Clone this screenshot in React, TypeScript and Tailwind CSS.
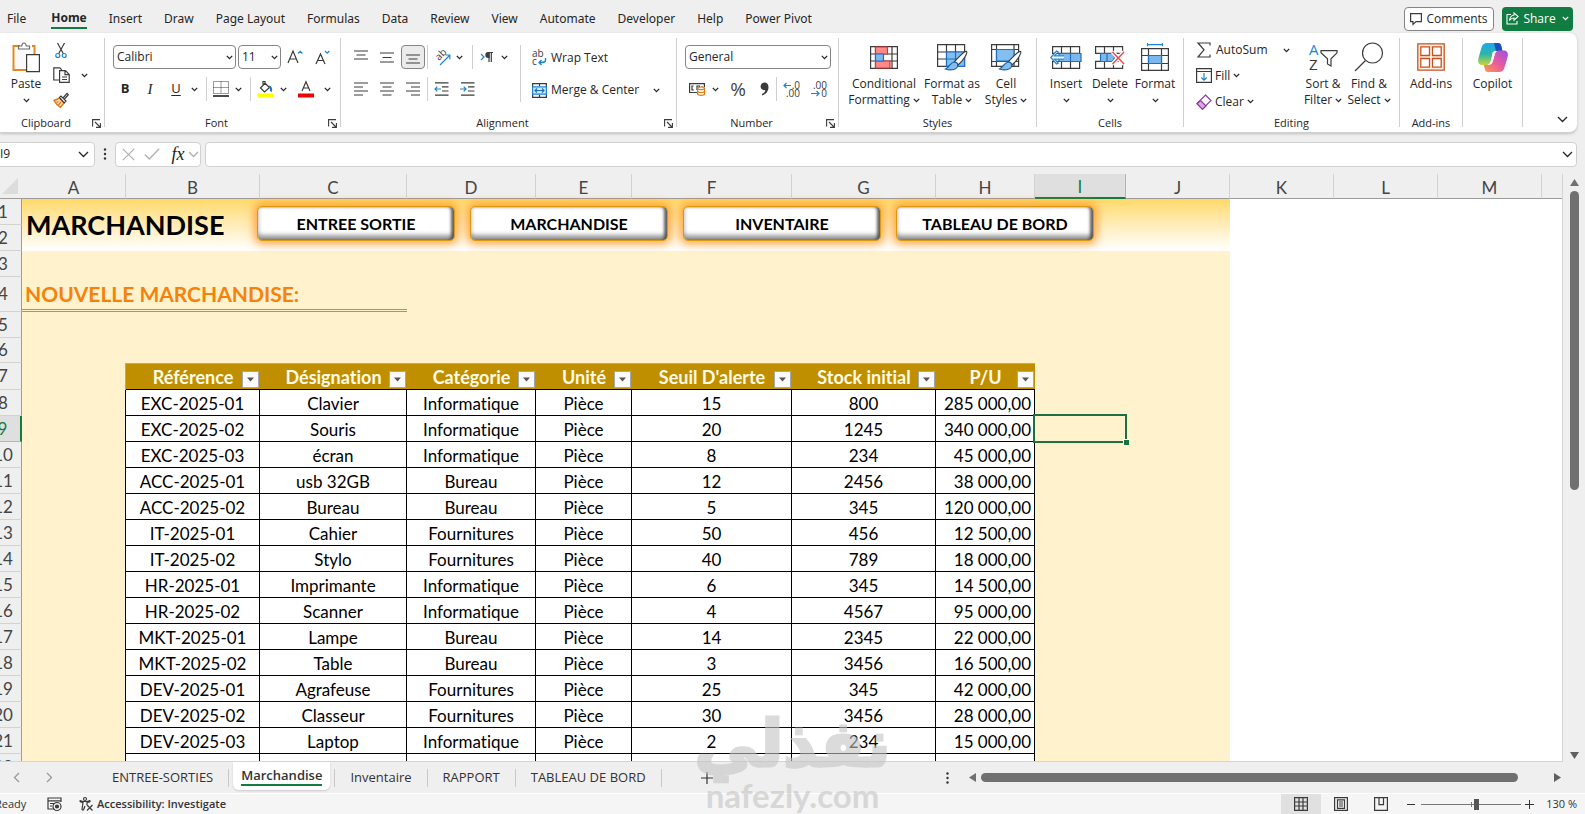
import type { ReactNode } from 'react'

const tabs = ['File', 'Home', 'Insert', 'Draw', 'Page Layout', 'Formulas', 'Data', 'Review', 'View', 'Automate', 'Developer', 'Help', 'Power Pivot']

const columns = [
  { name: 'A', width: 'w-[104px]' },
  { name: 'B', width: 'w-[134px]' },
  { name: 'C', width: 'w-[147px]' },
  { name: 'D', width: 'w-[129px]' },
  { name: 'E', width: 'w-[96px]' },
  { name: 'F', width: 'w-[160px]' },
  { name: 'G', width: 'w-[144px]' },
  { name: 'H', width: 'w-[99px]' },
  { name: 'I', width: 'w-[91px]' },
  { name: 'J', width: 'w-[104px]' },
  { name: 'K', width: 'w-[104px]' },
  { name: 'L', width: 'w-[104px]' },
  { name: 'M', width: 'w-[104px]' },
]

const headers = ['Référence', 'Désignation', 'Catégorie', 'Unité', "Seuil D'alerte", 'Stock initial', 'P/U']

const products = [
  ['EXC-2025-01', 'Clavier', 'Informatique', 'Pièce', '15', '800', '285 000,00'],
  ['EXC-2025-02', 'Souris', 'Informatique', 'Pièce', '20', '1245', '340 000,00'],
  ['EXC-2025-03', 'écran', 'Informatique', 'Pièce', '8', '234', '45 000,00'],
  ['ACC-2025-01', 'usb 32GB', 'Bureau', 'Pièce', '12', '2456', '38 000,00'],
  ['ACC-2025-02', 'Bureau', 'Bureau', 'Pièce', '5', '345', '120 000,00'],
  ['IT-2025-01', 'Cahier', 'Fournitures', 'Pièce', '50', '456', '12 500,00'],
  ['IT-2025-02', 'Stylo', 'Fournitures', 'Pièce', '40', '789', '18 000,00'],
  ['HR-2025-01', 'Imprimante', 'Informatique', 'Pièce', '6', '345', '14 500,00'],
  ['HR-2025-02', 'Scanner', 'Informatique', 'Pièce', '4', '4567', '95 000,00'],
  ['MKT-2025-01', 'Lampe', 'Bureau', 'Pièce', '14', '2345', '22 000,00'],
  ['MKT-2025-02', 'Table', 'Bureau', 'Pièce', '3', '3456', '16 500,00'],
  ['DEV-2025-01', 'Agrafeuse', 'Fournitures', 'Pièce', '25', '345', '42 000,00'],
  ['DEV-2025-02', 'Classeur', 'Fournitures', 'Pièce', '30', '3456', '28 000,00'],
  ['DEV-2025-03', 'Laptop', 'Informatique', 'Pièce', '2', '234', '15 000,00'],
  ['DEV-2025-04', 'Disque dur', 'Informatique', 'Pièce', '7', '567', '55 000,00'],
]

const shapes = ['ENTREE SORTIE', 'MARCHANDISE', 'INVENTAIRE', 'TABLEAU DE BORD']

function Chev({ className = '' }: { className?: string }) {
  return (
    <svg width="7" height="5" viewBox="0 0 7 5" fill="none" stroke="currentColor" strokeWidth="1.3" className={`shrink-0 ${className}`}>
      <path d="M.8.9 3.5 3.6 6.2.9" />
    </svg>
  )
}

function BigChev({ className = '' }: { className?: string }) {
  return (
    <svg width="11" height="7" viewBox="0 0 11 7" fill="none" stroke="currentColor" strokeWidth="1.3" className={`shrink-0 ${className}`}>
      <path d="M1 1l4.500 4.500L10 1" />
    </svg>
  )
}

function Svg({ w, h, children }: { w: number; h: number; children: ReactNode }) {
  return (
    <svg width={w} height={h} viewBox={`0 0 ${w} ${h}`} fill="none" stroke="#3b3b3b" strokeWidth="1.2" className="shrink-0 overflow-visible">
      {children}
    </svg>
  )
}

function Tool({ label, width = 'w-[26px]', className = '', children }: { label: string; width?: string; className?: string; children: ReactNode }) {
  return (
    <button aria-label={label} className={`flex h-6 shrink-0 items-center justify-center ${width} ${className}`}>
      {children}
    </button>
  )
}

function Sep({ className = 'h-6' }: { className?: string }) {
  return <span className={`w-px shrink-0 bg-[#d0d0d0] ${className}`} />
}

function Group({ label, width, launcher, children }: { label: string; width: string; launcher?: boolean; children: ReactNode }) {
  return (
    <section aria-label={label || 'Copilot'} className={`mt-[5px] flex h-[94px] shrink-0 ${width}`}>
      <div className="flex min-w-0 flex-1 flex-col">
        <div className="h-[76px]">{children}</div>
        <div className="flex h-[18px] items-center">
          <span className="flex-1 text-center text-[11px] leading-4">{label}</span>
          {launcher && (
            <button aria-label={`${label} settings`} className="mr-[3px] flex w-[9px] shrink-0 justify-center">
              <svg width="9" height="9" viewBox="0 0 9 9" fill="none" stroke="#3b3b3b" strokeWidth="1.1">
                <path d="M.6 7.500V.6h7.400M3 3l5 5M8.400 4v4.400H4" />
              </svg>
            </button>
          )}
        </div>
      </div>
      <Sep className="h-[89px]" />
    </section>
  )
}

function Big({ icon, lines, chevron, width }: { icon: ReactNode; lines: string[]; chevron?: boolean; width: string }) {
  return (
    <button className={`flex shrink-0 flex-col items-center text-[12px] leading-4 ${width}`}>
      <span className="flex h-[38px] items-center justify-center">{icon}</span>
      {lines.map((line, i) => (
        <span key={line} className="flex items-center gap-[3px] whitespace-nowrap">
          {line}
          {chevron && i === lines.length - 1 && lines.length > 1 && <Chev />}
        </span>
      ))}
      {chevron && lines.length === 1 && <span className="flex h-4 items-center"><Chev /></span>}
    </button>
  )
}

/* Ribbon icons */
const PasteIcon = () => (
  <Svg w={28} h={31}>
    <path d="M8 4H1.500v24h13M20 4h2.500v8" stroke="#e08a1e" strokeWidth="2" />
    <path d="M3 6h18v21H3z" fill="#fafafa" stroke="none" />
    <path d="M6.500 7V4h3.200C10 2 11 1 12 1s2 1 2.300 3h3.200v3z" fill="#fff" stroke="#6b6b6b" />
    <path d="M14.600 12.600h12.800v17H14.600z" fill="#fff" />
  </Svg>
)
const CutIcon = () => (
  <Svg w={12} h={17}>
    <path d="M2.500 1l6 11M9.500 1l-6 11" />
    <circle cx="2.800" cy="13.500" r="2" stroke="#1e86d0" />
    <circle cx="9.200" cy="13.500" r="2" stroke="#1e86d0" />
  </Svg>
)
const CopyIcon = () => (
  <Svg w={17} h={16}>
    <path d="M6 13H.8V.8h6l2 2" />
    <path d="M6.600 3.600h5.800l3.800 3.800v8H6.600zM12 3.600v4h4M9 10h5M9 12.500h5" />
  </Svg>
)
const BrushIcon = () => (
  <Svg w={16} h={16}>
    <path d="M1 8.500 6.500 6l4.500 5-3.500 4.300C4.500 13.500 2.500 11.500 1 8.500z" fill="#fbd9ae" stroke="#d97a16" strokeWidth="1.400" />
    <path d="M3.500 10.500l2-1M5.500 13l2.500-3" stroke="#d97a16" />
    <path d="M6.500 5.500 8 4l5 5-1.800 1.800zM10 6l4-4.700 1.300 1.400L11.500 7" fill="#fff" />
  </Svg>
)
const Lines = ({ d }: { d: string }) => (
  <Svg w={14} h={14}>
    <path d={d} />
  </Svg>
)
const ArrowLines = ({ out }: { out?: boolean }) => (
  <Svg w={15} h={14}>
    <path d="M1 .8h13.500M8 4.900h6.500M8 9h6.500M1 13.200h13.500" />
    <path d={out ? 'M7 7H1M3.300 4.700 1 7l2.300 2.300' : 'M0 7h6M3.700 4.700 6 7 3.700 9.300'} stroke="#1e86d0" />
  </Svg>
)
const BordersIcon = () => (
  <Svg w={16} h={16}>
    <path d="M.5.500h15v12H.5zM8 .5v12M.5 6.500h15" strokeDasharray="1 1" strokeWidth="1" />
    <path d="M0 15h16" stroke="#111" strokeWidth="1.500" />
  </Svg>
)
const FillColorIcon = () => (
  <Svg w={17} h={17}>
    <path d="M3.500 7 8 2.200l4.500 4.300-5 4.500zM8 2.200V.5h-2v4" />
    <path d="M12 5.500c2 .5 2.500 2 2 5" stroke="#1e70c0" strokeWidth="2" />
    <path d="M.5 12.500h16v4H.5z" fill="#ffff00" stroke="none" />
  </Svg>
)
const OrientationIcon = () => (
  <Svg w={17} h={17}>
    <text transform="translate(5 12) rotate(-45)" fontSize="10" fill="#3b3b3b" stroke="none" fontFamily="Open Sans, sans-serif">ab</text>
    <path d="M6 16 15.500 6.500M11.500 6h4.300v4.300" stroke="#1e86d0" />
  </Svg>
)
const DirectionIcon = () => (
  <Svg w={14} h={12}>
    <path d="M1 3l3 3-3 3" stroke="#1e86d0" />
    <path d="M9 11V1.500M11.300 11V1.500M13 1.500H8" />
    <path d="M9 1.500H8.300a2.400 2.400 0 000 4.800H9z" fill="#3b3b3b" />
  </Svg>
)
const WrapIcon = () => (
  <Svg w={15} h={16}>
    <text x="0" y="7" fontSize="10" fill="#3b3b3b" stroke="none" fontFamily="Open Sans, sans-serif">ab</text>
    <text x="0" y="15" fontSize="10" fill="#3b3b3b" stroke="none" fontFamily="Open Sans, sans-serif">c</text>
    <path d="M13.500 8v2c0 2-1 2.500-6 2.500M9.500 10 7 12.500 9.500 15" stroke="#1e86d0" strokeWidth="1.400" />
  </Svg>
)
const MergeIcon = () => (
  <Svg w={15} h={15}>
    <path d="M.6.600h13.800v13.800H.6zM7.500.6v3M7.500 11.500v3" />
    <path d="M.6 3.800h13.800v7.400H.6z" fill="#cfe8fa" stroke="#1e86d0" />
    <path d="M3 7.500h9M5 5.500l-2 2 2 2M10 5.500l2 2-2 2" stroke="#1e70c0" />
  </Svg>
)
const CurrencyIcon = () => (
  <Svg w={17} h={14}>
    <path d="M8 10.500H.6V1.600h14.800V5M4.500 4H3v4h2M8 8V4h2.500v2M12.500 4.500h1" />
    <path d="M8.600 6.300v5.500c0 2 7 2 7 0V6.300" fill="#fff" stroke="#e07b10" />
    <ellipse cx="12.100" cy="6.300" rx="3.500" ry="1.300" fill="#fff" stroke="#e07b10" />
    <path d="M8.600 9c0 2 7 2 7 0" stroke="#e07b10" />
  </Svg>
)
const DecimalIcon = ({ less }: { less?: boolean }) => (
  <Svg w={17} h={17}>
    <g fontSize="10" fill="#3b3b3b" stroke="none" fontFamily="Open Sans, sans-serif" textAnchor="end">
      <text x="17" y="8">{less ? '.00' : '.0'}</text>
      <text x="17" y="16">{less ? '0' : '.00'}</text>
    </g>
    <path d={less ? 'M1 12.500h8M6.500 10 9 12.500 6.500 15' : 'M8 4.500H1M3.500 2 1 4.500 3.500 7'} stroke="#1e86d0" />
  </Svg>
)
const ConditionalIcon = () => (
  <Svg w={28} h={23}>
    <path d="M.6.600h26.800v21.800H.6zM.6 8h26.800M.6 15h26.800M5.500.6v22M22 .6v22" fill="#fff" />
    <path d="M5.500 1h12v7h-12zM5.500 15H20v7H5.500z" fill="#ff8a8a" stroke="#e03030" />
    <path d="M5.500 8h8v7h-8z" fill="#7db8ee" stroke="#1e70c0" />
  </Svg>
)
const TablePaint = ({ cell }: { cell?: boolean }) => (
  <Svg w={31} h={27}>
    <path d="M.6.600h27v21.800H.6z" fill="#fff" />
    {cell ? <path d="M.6 5.500h27M.6 17.500h27M5.500.6v22M23 .6v22" /> : <path d="M.6 8h27M.6 15h27M9.500.6v22M18.500.6v22" />}
    <path d={cell ? 'M5.500 5.500H23v11.500H5.500z' : 'M9.500 8h18v14.400h-18z'} fill="#83beef" stroke="#1e70c0" />
    {!cell && <path d="M9.500 15h18M18.500 8v14" stroke="#1e70c0" />}
    <path d="M29.500 7.500c1.500 1-3 9-8.500 13.500l-3.500-3.300C20.500 14 28 6.500 29.500 7.500z" fill="#fff" />
    <path d="M17.500 18c2 0 3.500 1.500 3.300 3.500-.5 4-6.500 5.500-12.300 3.500 4-1.500 4-6.500 9-7z" fill="#83beef" stroke="#1e5f9e" />
  </Svg>
)
const InsertIcon = () => (
  <Svg w={32} h={23}>
    <path d="M2.600.600h27v6.800h-27zM11.500.6v7M20.500.6v7M2.600 15.400h27v7h-27zM11.500 15.400v7M20.500 15.400v7" />
    <path d="M9 7.500h22v8H9zM20.500 7.500v8" fill="#7ab8ee" stroke="#1e70c0" />
    <path d="M14 9.800H4.500L8.300 6 6.500 5 .8 11.500l5.700 6.500 1.800-1L4.500 13.200H14" fill="#fff" stroke="#1e86d0" />
  </Svg>
)
const DeleteIcon = () => (
  <Svg w={30} h={23}>
    <path d="M.6.600h27v6.800H.6zM9.500.6v7M18.500.6v7M.6 15.400h27v7H.6zM9.500 15.400v7M18.500 15.400v7" />
    <path d="M5.500 7.500H17l3 4-3 4H5.500zM12 7.500v8" fill="#7ab8ee" stroke="#1e70c0" />
    <path d="M17.500 6 29 18M29 6 17.500 18" stroke="#fff" strokeWidth="4" />
    <path d="M17.500 6 29 18M29 6 17.500 18" stroke="#ee4444" strokeWidth="1.400" />
  </Svg>
)
const FormatIcon = () => (
  <Svg w={28} h={28}>
    <path d="M.6 5.600h26.800v21.800H.6zM.6 12.500h26.800M.6 20.500h26.800M7.500 5.600v21.800M20.500 5.600v21.800" />
    <path d="M7.500 12.500h13v8h-13z" fill="#7ab8ee" stroke="#1e70c0" />
    <path d="M6.500 1.600h15M6.500 0v3.200M21.500 0v3.200" stroke="#1e86d0" />
  </Svg>
)
const SortIcon = () => (
  <Svg w={30} h={28}>
    <text x="1" y="12" fontSize="15" fill="#1e86d0" stroke="none" fontFamily="Open Sans, sans-serif">A</text>
    <text x="1" y="27" fontSize="15" fill="#3b3b3b" stroke="none" fontFamily="Open Sans, sans-serif">Z</text>
    <path d="M13 7.600h16v2.200l-6 6v7.200l-3.500-2v-5.200l-6.500-6z" />
  </Svg>
)
const FindIcon = () => (
  <Svg w={30} h={30}>
    <circle cx="18.500" cy="11" r="10" />
    <path d="M11.500 18.500 1 29" />
  </Svg>
)
const AddinsIcon = () => (
  <Svg w={28} h={28}>
    <g stroke="#c8501e" strokeWidth="1.300">
      <path d="M.8.800h26.400v26.400H.8z" fill="#fdf0e6" />
      <path d="M3.800 3.800h8.700v8.700H3.800zM15.500 3.800h8.700v8.700h-8.700zM3.800 15.500h8.700v8.700H3.800zM15.500 15.500h8.700v8.700h-8.700z" fill="#fff" />
    </g>
  </Svg>
)
const CopilotIcon = () => (
  <svg width="30" height="29" viewBox="0 0 30 29">
    <defs>
      <linearGradient id="cpA" x1="0" y1="0" x2="0" y2="1">
        <stop offset="0" stopColor="#1ca8ec" />
        <stop offset=".5" stopColor="#2bb6a8" />
        <stop offset="1" stopColor="#c5d63a" />
      </linearGradient>
      <linearGradient id="cpB" x1="1" y1="0" x2="0" y2="1">
        <stop offset="0" stopColor="#9b4fe8" />
        <stop offset=".5" stopColor="#e85aa0" />
        <stop offset="1" stopColor="#ff9a4a" />
      </linearGradient>
    </defs>
    <path d="M9 0h11c2 0 2.500 1 3 3l1 5h-5c-3 0-4 1.500-4.600 4L13 17c-1 3.500-2 5-5 5H4c-3.500 0-4.500-3-3.500-7L3.500 4.500C4.500 1.500 6 0 9 0z" fill="url(#cpA)" />
    <path d="M16 0h4c2.300 0 3 1.500 3.500 3.500L24.500 8H18z" fill="#1850c0" />
    <path d="M21 29H10c-2 0-2.700-1-3.200-3l-1-4H10c3 0 4.200-1.500 5-4.500l1.500-5c1-3.500 2-5 5-5H26c3.500 0 4.500 3 3.500 7L26.500 24.500c-1 3-2.500 4.500-5.500 4.500z" fill="url(#cpB)" />
    <path d="M14.500 9.500c.8-1.300 2-1.600 4-1.600-1 .8-1.500 2-2 3.800l-1.800 6.500c-.5 1.600-1.200 2.500-2.500 3 .5-1 .6-1.600 1-3z" fill="#fff" />
  </svg>
)

function Ribbon() {
  return (
    <div className="z-10 mr-2 flex h-[100px] shrink-0 overflow-hidden rounded-r-lg border-b border-[#cfcfcf] bg-white shadow-[0_1px_3px_rgba(0,0,0,0.2)]">
      <Group label="Clipboard" width="w-[105px]" launcher>
        <div className="flex pl-[7px]">
          <Big width="w-[38px]" icon={<PasteIcon />} lines={['Paste']} chevron />
          <div className="flex flex-col pl-2">
            <Tool label="Cut" width="w-4"><CutIcon /></Tool>
            <div className="flex items-center gap-3">
              <Tool label="Copy" width="w-4" className="h-[26px]"><CopyIcon /></Tool>
              <Chev />
            </div>
            <Tool label="Format Painter" width="w-4"><BrushIcon /></Tool>
          </div>
        </div>
      </Group>

      <Group label="Font" width="w-[236px]" launcher>
        <div className="flex flex-col gap-2 pl-2 pt-[7px]">
          <div className="flex">
            <label className="relative mr-[2px] block">
              <select aria-label="Font name" className="block h-6 w-[123px] appearance-none rounded border border-[#858585] px-[3px] text-[12px]"><option>Calibri</option></select>
              <Chev className="absolute right-[3px] top-[10px]" />
            </label>
            <label className="relative block">
              <select aria-label="Font size" className="block h-6 w-[43px] appearance-none rounded border border-[#858585] px-[3px] text-[12px]"><option>11</option></select>
              <Chev className="absolute right-[3px] top-[10px]" />
            </label>
            <Tool label="Increase font size" width="w-[28px]">
              <Svg w={16} h={16}>
                <path d="M1 14 6 2l5 12M2.700 10h6.600" />
                <path d="M11 4.500 13.200 2.300l2.200 2.200" stroke="#1e86d0" />
              </Svg>
            </Tool>
            <Tool label="Decrease font size">
              <Svg w={16} h={16}>
                <path d="M2 15 6.500 5l4.500 10M3.500 11.500h6" />
                <path d="M11 2l2.200 2.200L15.400 2" stroke="#1e86d0" />
              </Svg>
            </Tool>
          </div>
          <div className="flex items-center">
            <Tool label="Bold" width="w-[24px]"><b className="text-[13px]">B</b></Tool>
            <Tool label="Italic"><i className="font-[Liberation_Serif] text-[15px]">I</i></Tool>
            <Tool label="Underline"><span className="text-[13px] underline underline-offset-2">U</span></Tool>
            <Chev className="ml-[2px] mr-2" />
            <Sep />
            <Tool label="Borders" width="w-[28px]"><BordersIcon /></Tool>
            <Chev className="mr-2" />
            <Sep />
            <Tool label="Fill color" width="w-[28px]"><FillColorIcon /></Tool>
            <Chev className="ml-px" />
            <Tool label="Font color" width="w-[38px]">
              <Svg w={16} h={17}>
                <path d="M4 10 8 .8l4 9.200M5.400 7h5.200" />
                <path d="M0 12.500h16v4H0z" fill="#f00000" stroke="none" />
              </Svg>
            </Tool>
            <Chev className="-ml-px" />
          </div>
        </div>
      </Group>

      <Group label="Alignment" width="w-[336px]" launcher>
        <div className="flex pl-[7px] pt-[7px]">
          <div className="flex w-[172px] flex-col gap-2">
            <div className="flex items-center">
              <Tool label="Top align"><Lines d="M0 1h14M2.500 5h9M0 9h14" /></Tool>
              <Tool label="Middle align"><Lines d="M0 3h14M2.500 7.500h9M0 12h14" /></Tool>
              <Tool label="Bottom align" width="w-6" className="mx-px rounded border border-[#858585] bg-[#ebebeb]"><Lines d="M0 5h14M2.500 9h9M0 13h14" /></Tool>
              <Sep className="ml-px h-6" />
              <Tool label="Orientation" width="w-[28px]"><OrientationIcon /></Tool>
              <Chev className="mr-[9px]" />
              <Sep />
              <Tool label="Text direction" width="w-[28px]"><DirectionIcon /></Tool>
              <Chev />
            </div>
            <div className="flex items-center">
              <Tool label="Align left"><Lines d="M0 1h14M0 5h9M0 9h14M0 13h9" /></Tool>
              <Tool label="Center"><Lines d="M0 1h14M2.500 5h9M0 9h14M2.500 13h9" /></Tool>
              <Tool label="Align right"><Lines d="M0 1h14M5 5h9M0 9h14M5 13h9" /></Tool>
              <Sep className="ml-px h-6" />
              <Tool label="Decrease indent"><ArrowLines out /></Tool>
              <Tool label="Increase indent"><ArrowLines /></Tool>
            </div>
          </div>
          <div className="flex flex-1 flex-col gap-2 border-l border-[#d0d0d0] pl-[11px] text-[12px]">
            <button className="flex h-[25px] items-center gap-1"><WrapIcon />Wrap Text</button>
            <div className="flex items-center">
              <button className="flex h-6 w-[121px] items-center gap-1 whitespace-nowrap"><MergeIcon />Merge &amp; Center</button>
              <Chev />
            </div>
          </div>
        </div>
      </Group>

      <Group label="Number" width="w-[162px]" launcher>
        <div className="flex flex-col gap-2 pl-2 pt-[7px]">
          <label className="relative block w-[146px]">
            <select aria-label="Number format" className="block h-6 w-full appearance-none rounded border border-[#858585] px-[3px] text-[12px]"><option>General</option></select>
            <Chev className="absolute right-[3px] top-[10px]" />
          </label>
          <div className="flex items-center">
            <Tool label="Accounting format" width="w-[24px]"><CurrencyIcon /></Tool>
            <Chev className="ml-[3px] mr-[5px]" />
            <Tool label="Percent" width="w-[28px]"><span className="text-[19px] leading-6 text-[#444]">%</span></Tool>
            <Tool label="Comma" width="w-6">
              <svg width="9" height="14" viewBox="0 0 9 14" fill="#3b3b3b"><path d="M4.500.5C7 .5 8.500 2.300 8.500 5c0 4-2.300 7-6 8.500l-.7-1.200C4 11 5.200 9.500 5.300 8 2.800 8.700.6 7 .6 4.500.6 2.200 2.300.5 4.500.5z" /></svg>
            </Tool>
            <Sep />
            <Tool label="Increase decimal" width="w-[28px]"><DecimalIcon /></Tool>
            <Tool label="Decrease decimal"><DecimalIcon less /></Tool>
          </div>
        </div>
      </Group>

      <Group label="Styles" width="w-[198px]">
        <div className="flex pl-[8px]">
          <Big width="w-[74px]" icon={<ConditionalIcon />} lines={['Conditional', 'Formatting']} chevron />
          <Big width="w-[62px]" icon={<TablePaint />} lines={['Format as', 'Table']} chevron />
          <Big width="w-[46px]" icon={<TablePaint cell />} lines={['Cell', 'Styles']} chevron />
        </div>
      </Group>

      <Group label="Cells" width="w-[147px]">
        <div className="flex pl-[7px]">
          <Big width="w-[44px]" icon={<InsertIcon />} lines={['Insert']} chevron />
          <Big width="w-[44px]" icon={<DeleteIcon />} lines={['Delete']} chevron />
          <Big width="w-[46px]" icon={<FormatIcon />} lines={['Format']} chevron />
        </div>
      </Group>

      <Group label="Editing" width="w-[216px]">
        <div className="flex pl-3">
          <div className="flex w-[104px] flex-col text-[12px]">
            <button className="flex h-6 items-center gap-1">
              <Svg w={16} h={16}><path d="M14 3.500V1H2l6 6.800L2 15h12v-2.500" /></Svg>
              AutoSum
              <Chev className="ml-auto mr-[10px]" />
            </button>
            <button className="flex h-[27px] items-center gap-[3px]">
              <Svg w={16} h={15}>
                <path d="M.6.600h14.800v13.800H.6zM.6 3.500h14.800" />
                <path d="M8 5v7M5.300 9.500 8 12.200l2.700-2.700" stroke="#1e86d0" />
              </Svg>
              Fill <Chev />
            </button>
            <button className="flex h-[25px] items-center gap-[3px]">
              <Svg w={16} h={16}>
                <path d="M9.500 1 15 6.500 6.500 15 1 9.500z" stroke="#8e3f9e" fill="#fff" />
                <path d="M4.500 6.500 10 12l-3.500 3.300L1 9.700z" stroke="#8e3f9e" fill="#dba6e3" />
              </Svg>
              Clear <Chev />
            </button>
          </div>
          <Big width="w-[46px]" icon={<SortIcon />} lines={['Sort &', 'Filter']} chevron />
          <Big width="w-[46px]" icon={<FindIcon />} lines={['Find &', 'Select']} chevron />
        </div>
      </Group>

      <Group label="Add-ins" width="w-[63px]">
        <Big width="w-[62px]" icon={<AddinsIcon />} lines={['Add-ins']} />
      </Group>
      <Group label="" width="w-[60px]">
        <Big width="w-[59px]" icon={<CopilotIcon />} lines={['Copilot']} />
      </Group>
      <button aria-label="Collapse ribbon" className="ml-auto mr-[9px] mt-auto pb-[9px]"><BigChev /></button>
    </div>
  )
}

function FormulaBar() {
  return (
    <div className="flex h-[41px] shrink-0 items-center pr-2 pt-px">
      <div className="-ml-2 flex h-[25px] w-[103px] items-center rounded border border-[#d0d0d0] bg-white">
        <input aria-label="Name box" defaultValue="I9" className="min-w-0 flex-1 pl-[7px] text-[12px] outline-none" />
        <BigChev className="mr-[5px]" />
      </div>
      <svg width="20" height="12" viewBox="0 0 20 12" fill="#333"><circle cx="10" cy="1.500" r="1.200" /><circle cx="10" cy="6" r="1.200" /><circle cx="10" cy="10.500" r="1.200" /></svg>
      <div className="mr-1 flex h-[25px] w-[86px] items-center rounded border border-[#d0d0d0] bg-white pl-[6px] text-[#b0b0b0]">
        <svg width="13" height="13" viewBox="0 0 13 13" fill="none" stroke="currentColor" strokeWidth="1.200"><path d="M.8.800l11.400 11.400M12.200.8.800 12.200" /></svg>
        <svg width="16" height="12" viewBox="0 0 16 12" fill="none" stroke="currentColor" strokeWidth="1.300" className="mx-[9px]"><path d="M.8 6.500l4.500 4.500L15.200.8" /></svg>
        <button aria-label="Insert function" className="w-[18px] font-[Liberation_Serif] text-[18px] italic leading-5 text-[#222]">fx</button>
        <BigChev className="ml-px" />
      </div>
      <div className="flex h-[25px] flex-1 items-center rounded border border-[#d0d0d0] bg-white">
        <input aria-label="Formula bar" className="h-full min-w-0 flex-1 px-2 text-[12px] outline-none" />
        <BigChev className="mr-[3px]" />
      </div>
    </div>
  )
}

function RowHead({ n, height = 'h-[26px]' }: { n: number; height?: string }) {
  return (
    <th
      className={`p-0 text-center font-normal ${height} ${
        n === 9 ? 'border-b border-r-2 border-b-[#b5b5b5] border-r-[#107c41] bg-[#dfdfdf] text-[#107c41]' : 'border-b border-r border-b-[#d2d2d2] border-r-[#9c9c9c] bg-[#efefef] text-[#444]'
      }`}
    >
      {n}
    </th>
  )
}

function Sheet() {
  return (
    <div className="relative min-w-0 flex-1 overflow-hidden border-b border-r border-[#d4d4d4] bg-white font-[Lato,sans-serif]">
      <table className="-ml-[15px] w-[calc(100%+15px)] table-fixed border-separate border-spacing-0 text-[17px] leading-5 text-black [font-variant-ligatures:none]">
        <colgroup>
          <col className="w-[37px]" />
          {columns.map(c => <col key={c.name} className={c.width} />)}
          <col />
        </colgroup>
        <thead>
          <tr className="bg-[#efefef] text-[#444]">
            <th className="h-[25px] border-b border-[#9c9c9c] p-0">
              <svg width="16" height="16" viewBox="0 0 16 16" className="ml-auto mr-1"><path d="M16 0v16H0z" fill="#dcdcdc" /></svg>
            </th>
            {columns.map(c => (
              <th
                key={c.name}
                className={`p-0 pt-[3px] text-center font-normal ${
                  c.name === 'I' ? 'border-b-2 border-r border-b-[#107c41] border-r-[#b5b5b5] bg-[#dfdfdf] text-[#107c41]' : 'border-b border-r border-b-[#9c9c9c] border-r-[#d2d2d2]'
                }`}
              >
                {c.name}
              </th>
            ))}
            <th className="border-b border-[#9c9c9c] p-0" />
          </tr>
        </thead>
        <tbody>
          <tr>
            <RowHead n={1} />
            <td colSpan={2} rowSpan={2} className="bg-linear-to-b from-[#ffd966] to-white p-0 pl-1 text-[27px] font-bold leading-8">MARCHANDISE</td>
            <td colSpan={8} rowSpan={2} className="bg-linear-to-b from-[#ffd966] to-white p-0" />
            <td colSpan={4} rowSpan={2} />
          </tr>
          <tr><RowHead n={2} /></tr>
          <tr>
            <RowHead n={3} />
            <td colSpan={10} className="bg-[#fff2cc]" />
            <td colSpan={4} />
          </tr>
          <tr>
            <RowHead n={4} height="h-[35px]" />
            <td colSpan={3} className="border-b-3 border-double border-[#d98a17] bg-[#fff2cc] p-0 pl-[3px] pt-px text-[21px] font-bold text-[#f5820b]">NOUVELLE MARCHANDISE:</td>
            <td colSpan={7} className="bg-[#fff2cc]" />
            <td colSpan={4} />
          </tr>
          <tr>
            <RowHead n={5} />
            <td colSpan={10} className="bg-[#fff2cc]" />
            <td colSpan={4} />
          </tr>
          <tr>
            <RowHead n={6} height="h-[25px]" />
            <td colSpan={10} className="bg-[#fff2cc]" />
            <td colSpan={4} />
          </tr>
          <tr>
            <RowHead n={7} height="h-[27px]" />
            <td className="border-r border-[#a3a9b3] bg-[#fff2cc] p-0" />
            {headers.map(h => (
              <th key={h} className="relative border-b border-t border-b-black border-t-[#a3a9b3] bg-[#bf8f00] p-0 text-center text-[18px] font-bold text-[#fffbe6]">
                {h}
                <button aria-label={`Filter ${h}`} className="absolute bottom-px right-px flex size-[17px] items-center justify-center border border-[#a3a9b3] bg-[#fafafa]">
                  <svg width="7" height="5" viewBox="0 0 7 5" fill="#555"><path d="M0 .5h7L3.500 4.500z" /></svg>
                </button>
              </th>
            ))}
            <td colSpan={2} className="bg-[#fff2cc]" />
            <td colSpan={4} />
          </tr>
          {products.map((row, i) => (
            <tr key={row[0]}>
              <RowHead n={i + 8} />
              <td className="border-r border-black bg-[#fff2cc] p-0" />
              {row.map((value, j) => (
                <td key={j} className={`whitespace-nowrap border-b border-r border-black bg-white p-0 align-bottom leading-[23px] ${j === 6 ? 'pr-[3px] text-right' : 'text-center'}`}>{value}</td>
              ))}
              {i === 1 ? (
                <td className="relative bg-[#fff2cc] p-0">
                  <span className="absolute -bottom-px -left-[2px] -right-px -top-[2px] border-2 border-[#1d7044]">
                    <span className="absolute -bottom-[4px] -right-[4px] size-[6px] border-l border-t border-white bg-[#1d7044]" />
                  </span>
                </td>
              ) : (
                <td className="bg-[#fff2cc] p-0" />
              )}
              <td className="bg-[#fff2cc] p-0" />
              <td colSpan={4} />
            </tr>
          ))}
        </tbody>
      </table>

      {/* Navigation shapes floating over the sheet */}
      <nav className="absolute left-[257px] top-[32px] flex gap-[15px]">
        {shapes.map(s => (
          <button
            key={s}
            className="h-[35px] w-[198px] rounded-[5px] border border-[#d99a10] bg-white text-[16px] font-bold text-black shadow-[0_0_8px_3px_rgba(255,140,20,0.75),inset_-3px_0_3px_rgba(60,60,60,0.75),inset_0_-5px_4px_rgba(90,90,90,0.6)]"
          >
            {s}
          </button>
        ))}
      </nav>
    </div>
  )
}

function SheetTabs() {
  const tab = 'flex h-[18px] items-center border-r border-[#c8c8c8] px-[15px]'
  return (
    <div className="flex h-[32px] shrink-0 items-center border-b border-white bg-[#efefef] text-[13px] text-[#333]">
      <div className="flex w-[97px] shrink-0 items-center gap-[26px] pl-[13px] text-[#999]">
        <svg width="7" height="11" viewBox="0 0 7 11" fill="none" stroke="currentColor" strokeWidth="1.300"><path d="M6 1 1.500 5.500 6 10" /></svg>
        <svg width="7" height="11" viewBox="0 0 7 11" fill="none" stroke="currentColor" strokeWidth="1.300"><path d="M1 1l4.500 4.500L1 10" /></svg>
      </div>
      <a href="#entree" className={tab}>ENTREE-SORTIES</a>
      <a href="#marchandise" className="mx-1 h-[28px] self-start rounded-b-md bg-white px-2 pt-1 font-semibold shadow-[0_1px_2px_rgba(0,0,0,0.15)]">
        <span className="block border-b-2 border-[#107c41] leading-[18px]">Marchandise</span>
      </a>
      <a href="#inventaire" className={`${tab} border-l`}>Inventaire</a>
      <a href="#rapport" className={tab}>RAPPORT</a>
      <a href="#tableau" className={tab}>TABLEAU DE BORD</a>
      <button aria-label="New sheet" className="ml-[39px]">
        <svg width="12" height="12" viewBox="0 0 12 12" stroke="#333" strokeWidth="1.200"><path d="M6 0v12M0 6h12" /></svg>
      </button>
      <div className="ml-auto flex w-[639px] items-center">
        <svg width="3" height="12" viewBox="0 0 3 12" fill="#333"><circle cx="1.500" cy="1.500" r="1.200" /><circle cx="1.500" cy="6" r="1.200" /><circle cx="1.500" cy="10.500" r="1.200" /></svg>
        <svg width="7" height="9" viewBox="0 0 7 9" fill="#707070" className="ml-5 mr-[5px]"><path d="M7 0v9L0 4.500z" /></svg>
        <span className="h-[9px] w-[537px] rounded-full bg-[#707070]" />
        <svg width="7" height="9" viewBox="0 0 7 9" fill="#606060" className="ml-auto mr-[24px]"><path d="M0 0v9l7-4.500z" /></svg>
      </div>
    </div>
  )
}

function StatusBar() {
  return (
    <div className="flex h-[20px] shrink-0 items-center bg-[#f5f5f5] text-[11px] leading-5 text-[#333]">
      <span className="-ml-[5px] w-[52px]">Ready</span>
      <Svg w={15} h={14}>
        <path d="M7 12H1V1h13v4M1 3.800h13M3 6.500h4M3 9h2" />
        <circle cx="10" cy="9.500" r="4" />
        <circle cx="10" cy="9.500" r="1.500" fill="#333" />
      </Svg>
      <button className="ml-[17px] flex items-center gap-[3px] font-semibold">
        <Svg w={15} h={14}>
          <circle cx="6" cy="2" r="1.500" />
          <path d="M1 3.500c-.5 1 .5 1.300 3 2L3 12.500c.7 1 1.500.5 2-1L6 9M11 3.500c.7 1-.5 1.500-3 2V8M8 8l5.500 5.500M13.500 8 8 13.500M1 3.500l3 1h4l3-1" />
        </Svg>
        Accessibility: Investigate
      </button>
      <div className="ml-auto flex h-full items-center">
        <button aria-label="Normal view" className="flex h-full w-10 items-center justify-center bg-[#e0e0e0]">
          <Svg w={14} h={14}><path d="M.6.600h12.800v12.800H.6zM5 .6v13M9 .6v13M.6 5h13M.6 9h13" /></Svg>
        </button>
        <button aria-label="Page layout view" className="flex w-10 justify-center">
          <Svg w={14} h={14}><path d="M.6.600h12.800v12.800H.6zM3.500 2.800h7v8.500h-7zM5 5h4M5 7h4M5 9h4" /></Svg>
        </button>
        <button aria-label="Page break view" className="flex w-10 justify-center">
          <Svg w={14} h={14}><path d="M.6.600h12.800v12.800H.6zM5 .6v7h4.500v-7" /></Svg>
        </button>
        <button aria-label="Zoom out" className="mx-[6px] h-px w-2 bg-[#333]" />
        <input
          type="range"
          aria-label="Zoom"
          min="0"
          max="100"
          defaultValue="56"
          className="h-3 w-[100px] appearance-none bg-[linear-gradient(#777,#777),linear-gradient(#777,#777)] bg-[length:100%_1px,1px_5px] bg-center bg-no-repeat [&::-webkit-slider-thumb]:h-[11px] [&::-webkit-slider-thumb]:w-[5px] [&::-webkit-slider-thumb]:appearance-none [&::-webkit-slider-thumb]:bg-[#555]"
        />
        <button aria-label="Zoom in" className="mx-1">
          <svg width="9" height="9" viewBox="0 0 9 9" stroke="#333"><path d="M4.500 0v9M0 4.500h9" /></svg>
        </button>
        <span className="w-[47px] pr-2 text-right">130 %</span>
      </div>
    </div>
  )
}

export default function App() {
  return (
    <div className="relative flex h-screen flex-col overflow-hidden bg-[#efefef] font-[Open_Sans,sans-serif] text-[#262626]">
      <header className="flex h-[33px] shrink-0 items-center pl-[7px] pr-3 pt-1">
        <nav className="flex flex-1 gap-[22px] font-[Noto_Sans,sans-serif] text-[12px] leading-5">
          {tabs.map(t => (
            <a key={t} href="#ribbon" className={t === 'Home' ? 'ml-[3px] border-b-2 border-[#107c41] font-bold leading-[18px]' : ''}>{t}</a>
          ))}
        </nav>
        <button className="mr-2 flex h-6 w-[90px] items-center justify-center gap-1 rounded border border-[#858585] bg-white text-[12px]">
          <Svg w={12} h={12}><path d="M.6.600h10.800v8H6l-3 2.800V8.600H.6z" /></Svg>
          Comments
        </button>
        <button className="flex h-6 w-[71px] items-center justify-center gap-1 rounded bg-[#107c41] text-[12px] text-white">
          <svg width="13" height="13" viewBox="0 0 13 13" fill="none" stroke="#fff" strokeWidth="1.100"><path d="M5 2.500H1v9.500h10V9M8 .8l4 3.700-4 3.700V6C6 6 4.500 6.800 3.500 8.500 3.800 5.500 5.300 3.500 8 3z" /></svg>
          Share
          <Chev className="ml-[2px]" />
        </button>
      </header>
      <Ribbon />
      <FormulaBar />
      <main className="flex min-h-0 flex-1">
        <Sheet />
        <div className="flex w-[22px] shrink-0 flex-col items-center pb-[3px] pt-[5px]">
          <svg width="9" height="7" viewBox="0 0 9 7" fill="#707070"><path d="M0 7h9L4.500 0z" /></svg>
          <span className="mt-[5px] h-[299px] w-[9px] rounded-full bg-[#707070]" />
          <svg width="9" height="7" viewBox="0 0 9 7" fill="#606060" className="mt-auto"><path d="M0 0h9L4.500 7z" /></svg>
        </div>
      </main>
      <SheetTabs />
      <StatusBar />

      {/* Watermark */}
      <div className="pointer-events-none absolute bottom-[3px] left-1/2 flex w-[200px] -translate-x-1/2 flex-col items-center font-bold text-[#c4c4c4] opacity-60">
        <span dir="rtl" className="font-[DejaVu_Sans] text-[64px] leading-[70px] [-webkit-text-stroke:3px_#c4c4c4]">نفذلي</span>
        <span className="font-[Lato] text-[33px] leading-8">nafezly.com</span>
      </div>
    </div>
  )
}
